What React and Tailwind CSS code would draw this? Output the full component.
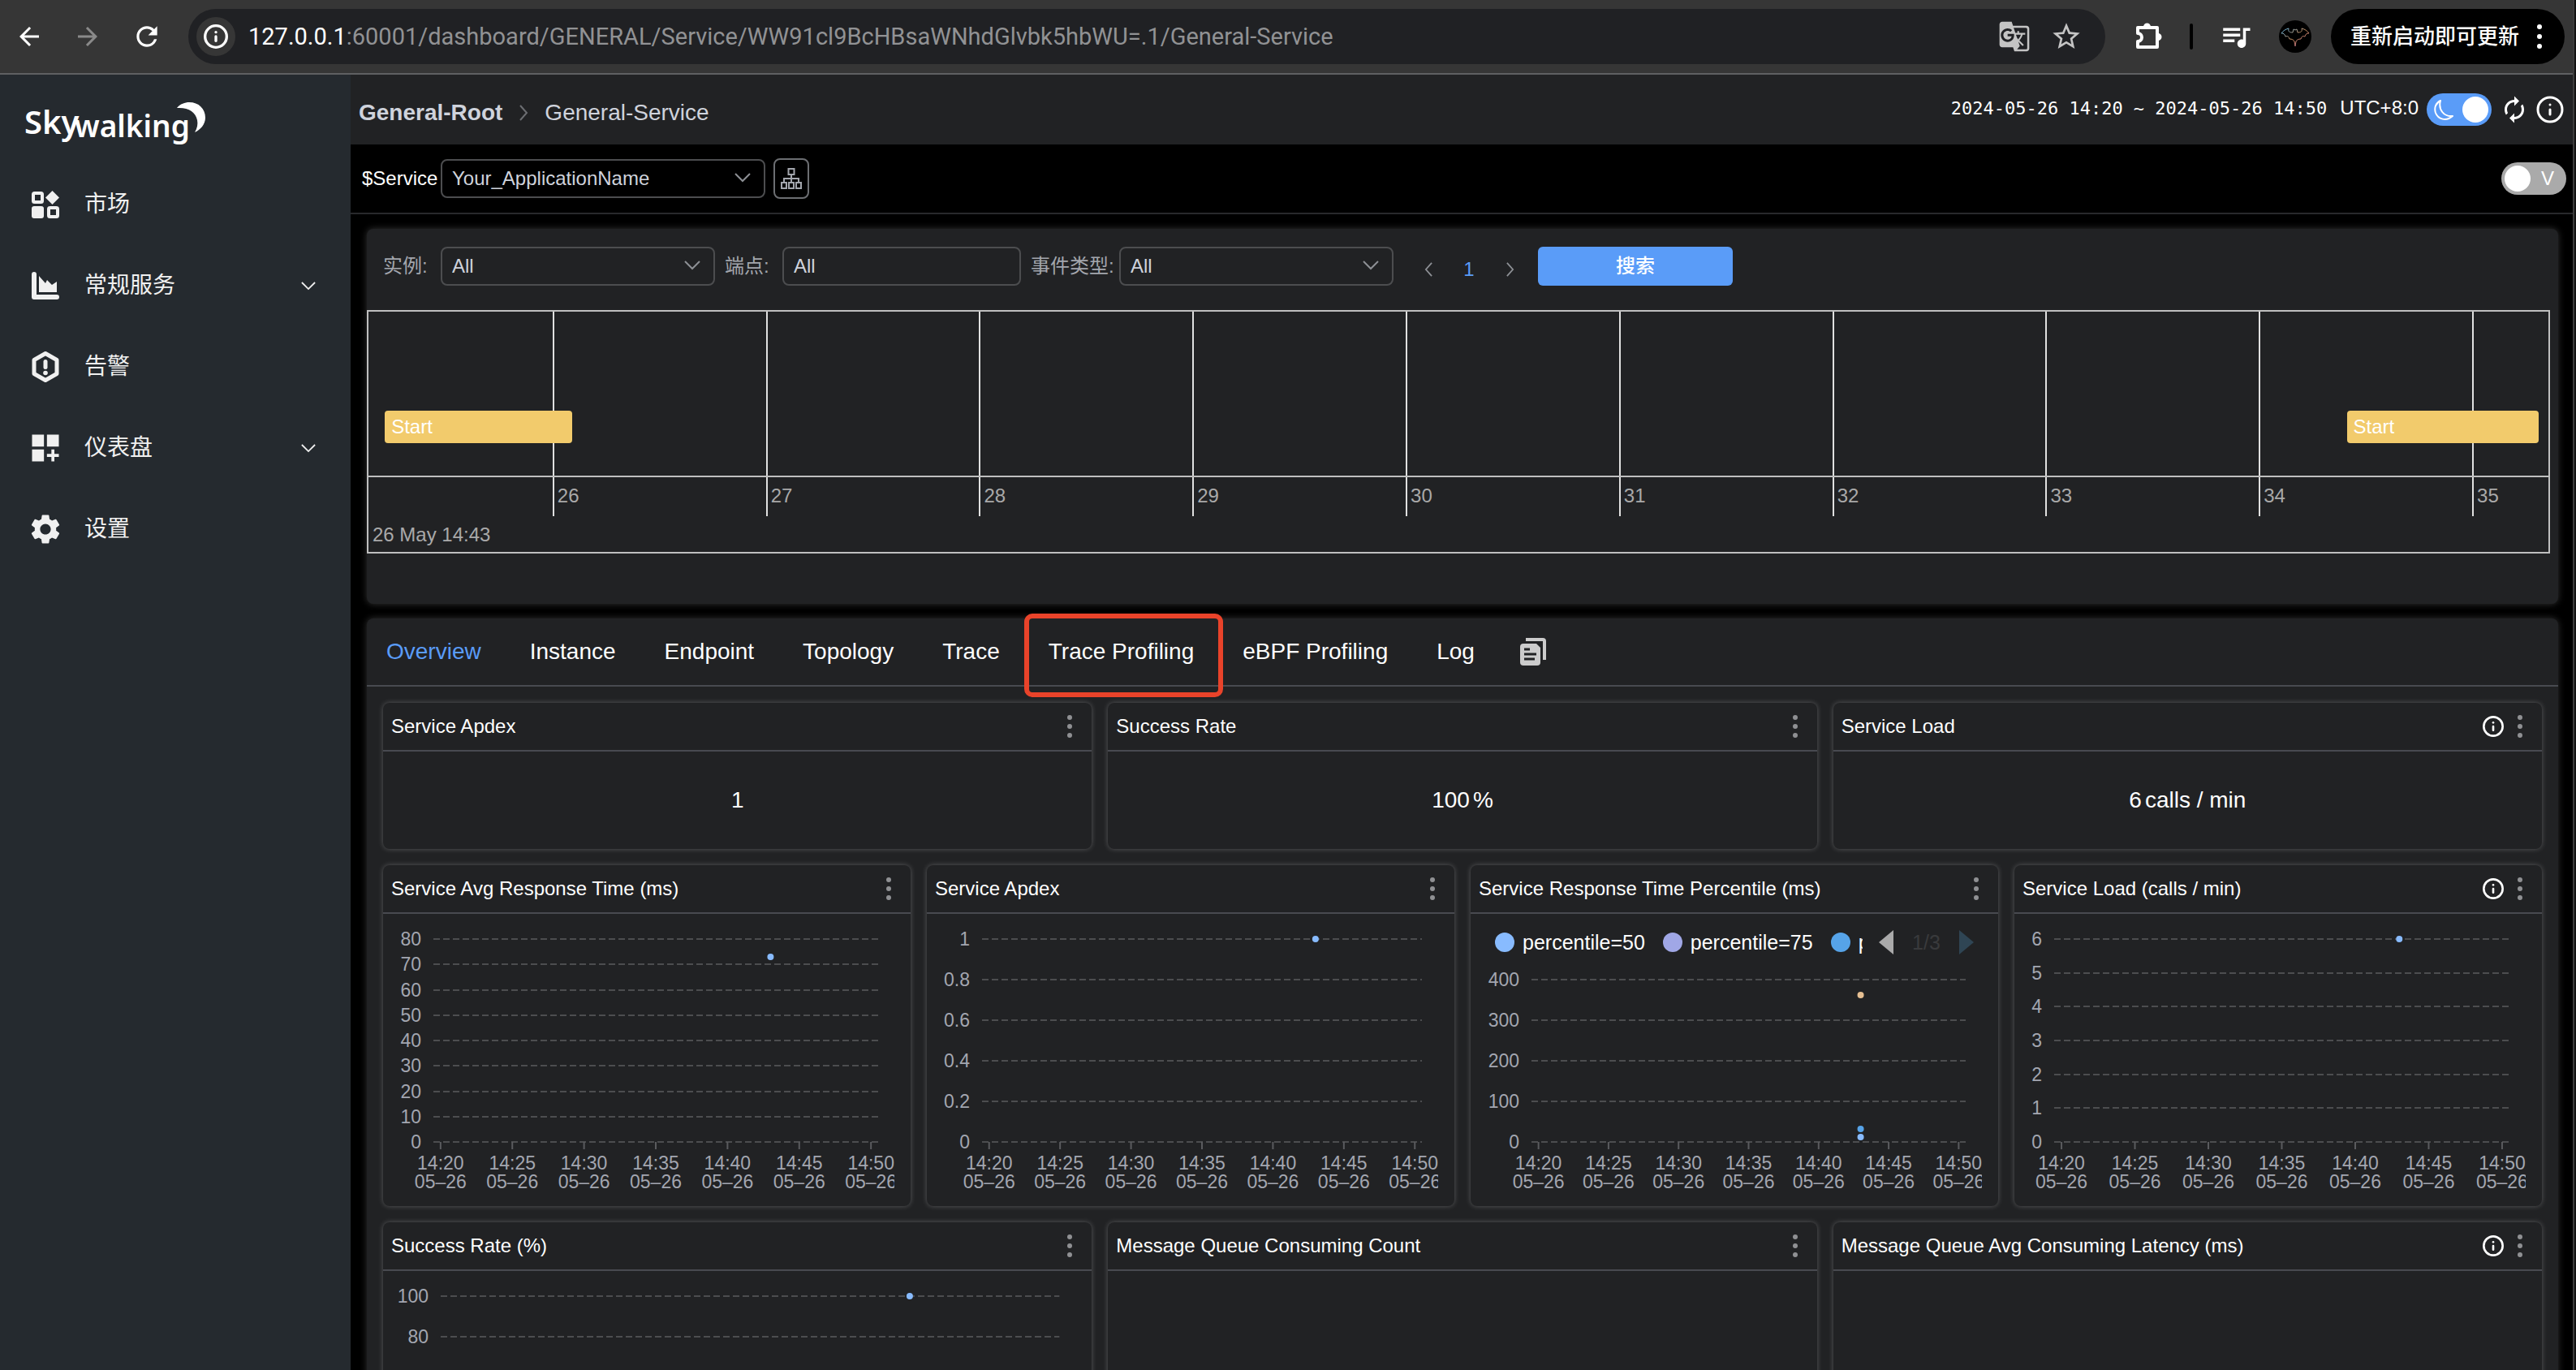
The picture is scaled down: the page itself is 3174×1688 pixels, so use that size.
import React from "react";
import {
  MdArrowBack,
  MdArrowForward,
  MdRefresh,
  MdGTranslate,
  MdStarBorder,
  MdQueueMusic,
  MdDashboardCustomize,
  MdSettings,
  MdAutorenew,
} from "react-icons/md";
import { Info } from "lucide-react";

const DownArrow = ({ className }) => (
  <svg viewBox="0 0 20 12" fill="none" stroke="currentColor" strokeWidth="2" className={className} aria-hidden="true">
    <path d="M1 1l9 9 9-9" />
  </svg>
);

const SideArrow = ({ className, left }) => (
  <svg viewBox="0 0 12 20" fill="none" stroke="currentColor" strokeWidth="2" className={className} aria-hidden="true">
    <path d={left ? "M10 1l-8 9 8 9" : "M2 1l8 9-8 9"} />
  </svg>
);

const PuzzleIcon = () => (
  <svg viewBox="0 0 36 36" className="h-9 w-9" fill="none" stroke="currentColor" strokeWidth="4" strokeLinejoin="round" aria-hidden="true">
    <path d="M4 7h24v24H4v-7a5 5 0 000-10z" />
    <path d="M11 6a4.500 4.500 0 019 0zM29 14a4.500 4.500 0 010 9z" fill="currentColor" stroke="none" />
  </svg>
);

const MarketIcon = () => (
  <svg viewBox="0 0 34 34" className="h-[34px] w-[34px]" fill="none" stroke="currentColor" strokeWidth="4" aria-hidden="true">
    <rect x="2" y="3" width="11" height="11" rx="1.5" />
    <path d="M25.5 0l8.5 8.5-8.5 8.5-8.500-8.500z" fill="currentColor" stroke="none" />
    <rect x="0" y="19" width="15" height="15" rx="3" fill="currentColor" stroke="none" />
    <rect x="21" y="21" width="11" height="11" rx="1.500" />
  </svg>
);

const AreaIcon = () => (
  <svg viewBox="0 0 34 34" className="h-[34px] w-[34px]" fill="currentColor" aria-hidden="true">
    <path d="M3 0a3 3 0 013 3v25h25a3 3 0 010 6H3a3 3 0 01-3-3V3a3 3 0 013-3z" />
    <path d="M9 25V5l8 9 2-4 6 6 6-4v13z" />
  </svg>
);

const AlarmIcon = () => (
  <svg viewBox="0 0 34 38" className="h-[38px] w-[34px]" fill="none" stroke="currentColor" aria-hidden="true">
    <path d="M17 2.500L31 10.500v17L17 35.500 3 27.500v-17z" strokeWidth="5" strokeLinejoin="round" />
    <path d="M17 12.500v7" strokeWidth="5" strokeLinecap="round" />
    <circle cx="17" cy="26.500" r="2.800" fill="currentColor" stroke="none" />
  </svg>
);

const TreeIcon = () => (
  <svg viewBox="0 0 26 26" className="h-[26px] w-[26px]" fill="none" stroke="currentColor" strokeWidth="2" aria-hidden="true">
    <rect x="9.500" y="1" width="7" height="7" />
    <rect x="1" y="18" width="6" height="7" />
    <rect x="10" y="18" width="6" height="7" />
    <rect x="19" y="18" width="6" height="7" />
    <path d="M13 8v10M4 18v-5h18v5" />
  </svg>
);

const CopyIcon = () => (
  <svg viewBox="0 0 32 34" className="h-[34px] w-8" aria-hidden="true">
    <path d="M7 0h21a4 4 0 014 4v23h-4V4H7z" fill="#cccccc" />
    <path d="M4 7h16l5 5v18a4 4 0 01-4 4H4a4 4 0 01-4-4V11a4 4 0 014-4z" fill="#cccccc" />
    <path d="M5 14h7M5 20h15M5 26h13" stroke="#212224" strokeWidth="3" />
  </svg>
);

const Bat = () => (
  <svg viewBox="0 0 40 40" className="h-10 w-10" aria-hidden="true">
    <defs>
      <linearGradient id="bat" x1="0" x2="1" y1="0" y2="1">
        <stop offset="0" stopColor="#5fb7e8" />
        <stop offset="0.5" stopColor="#c98c5c" />
        <stop offset="1" stopColor="#a0508f" />
      </linearGradient>
    </defs>
    <circle cx="20" cy="20" r="20" fill="#000" />
    <path
      d="M3 16c2-3 5-5 9-6-1 4 1 5 5 5l1-4 2 1 2-1 1 4c4 0 6-1 5-5 4 1 7 3 9 6-3 0-4 1-5 4-3-1-4 0-5 3-3 0-5 1-6 3l-1 6-1-6c-1-2-3-3-6-3-1-3-2-4-5-3-1-3-2-4-5-4z"
      fill="none"
      stroke="url(#bat)"
      strokeWidth="1"
    />
  </svg>
);

const Logo = () => (
  <svg viewBox="0 0 224 56" className="h-14 w-[224px] overflow-visible" fill="#fff" role="img" aria-label="Skywalking">
    <g fontFamily="Noto Sans, Open Sans, sans-serif" fontWeight="600">
      <text x="-2" y="41" fontSize="40">Sky</text>
      <text x="60" y="45" fontSize="37">walking</text>
    </g>
    <path d="M186 9C190 4 196 2 201 2c12 0 20 8 20 19 0 8-6 15-13 18 3-5 4-10 3-15C209 14 200 8 186 9z" />
  </svg>
);

function BrowserBar() {
  return (
    <div className="flex h-[92px] shrink-0 items-center border-b-2 border-[#5f6062] bg-[#363636] pl-[18px] pr-[10px] text-white">
      <button aria-label="Back"><MdArrowBack className="h-9 w-9" /></button>
      <button aria-label="Forward" className="ml-9 text-[#8a8a8a]"><MdArrowForward className="h-9 w-9" /></button>
      <button aria-label="Reload" className="ml-9"><MdRefresh className="h-[38px] w-[38px]" /></button>
      <div className="ml-8 flex h-[68px] min-w-0 flex-1 items-center rounded-full bg-[#202124] pl-[10px] pr-7">
        <button aria-label="Site information" className="flex h-12 w-12 shrink-0 items-center justify-center rounded-full bg-[#363636]">
          <Info className="h-8 w-8" strokeWidth={2.5} />
        </button>
        <p className="ml-4 flex-1 truncate font-['Roboto',sans-serif] text-[29px] leading-10 text-[#919294]">
          <span className="text-white">127.0.0.1</span>:60001/dashboard/GENERAL/Service/WW91cl9BcHBsaWNhdGlvbk5hbWU=.1/General-Service
        </p>
        <button aria-label="Translate" className="text-[#c4c4c4]"><MdGTranslate className="h-10 w-10" /></button>
        <button aria-label="Bookmark" className="ml-6 text-[#c4c4c4]"><MdStarBorder className="h-10 w-10" /></button>
      </div>
      <button aria-label="Extensions" className="ml-9"><PuzzleIcon /></button>
      <span className="ml-8 h-8 w-[4px] rounded-full bg-black" />
      <button aria-label="Media" className="ml-8"><MdQueueMusic className="h-[42px] w-[42px]" /></button>
      <button aria-label="Profile" className="ml-8"><Bat /></button>
      <button className="ml-6 flex h-[68px] w-[288px] items-center justify-between rounded-full bg-black pl-6 pr-7 text-[26px] font-medium">
        重新启动即可更新
        <svg viewBox="0 0 6 30" className="h-[30px] w-[6px]" fill="#fff" aria-hidden="true">
          <circle cx="3" cy="3" r="3" /><circle cx="3" cy="15" r="3" /><circle cx="3" cy="27" r="3" />
        </svg>
      </button>
    </div>
  );
}

const menu = [
  { label: "市场", icon: <MarketIcon /> },
  { label: "常规服务", icon: <AreaIcon />, more: true },
  { label: "告警", icon: <AlarmIcon /> },
  { label: "仪表盘", icon: <MdDashboardCustomize className="h-11 w-11" />, more: true },
  { label: "设置", icon: <MdSettings className="h-11 w-11" /> },
];

function Sidebar() {
  return (
    <aside className="w-[432px] shrink-0 bg-[#252a2f]">
      <div className="flex h-[110px] items-start pl-8 pt-8"><Logo /></div>
      <nav>
        {menu.map((m) => (
          <a key={m.label} href="#" className="flex h-[100px] items-center pl-[34px] pr-[43px] text-[28px] text-[#f0f0f0]">
            <span className="flex w-11 justify-center">{m.icon}</span>
            <span className="ml-[26px] flex-1">{m.label}</span>
            {m.more && <DownArrow className="h-[11px] w-[18px]" />}
          </a>
        ))}
      </nav>
    </aside>
  );
}

function Select({ id, value, width }) {
  return (
    <span className={`relative flex ${width}`}>
      <select id={id} className="h-12 w-full appearance-none rounded-lg border-2 border-[#4c4d4f] bg-transparent pl-3 pr-12 text-[24px] leading-8 text-[#cfd3dc]">
        <option>{value}</option>
      </select>
      <DownArrow className="pointer-events-none absolute right-[18px] top-[17px] h-3 w-5 text-[#8d9095]" />
    </span>
  );
}

function Header() {
  return (
    <header className="flex h-[86px] shrink-0 items-center justify-between bg-[#212224] pl-[10px] pr-[10px]">
      <nav className="mt-2 flex items-center text-[28px] text-[#cfd3dc]">
        <a href="#" className="font-bold">General-Root</a>
        <SideArrow className="mx-5 h-5 w-3 text-[#6c6e72]" />
        <span>General-Service</span>
      </nav>
      <div className="flex items-center text-white">
        <span className="mb-1 font-['DejaVu_Sans_Mono',monospace] text-[22px]">2024-05-26 14:20 ~ 2024-05-26 14:50</span>
        <span className="mb-1 ml-4 text-[24px]">UTC+8:0</span>
        <span className="relative ml-[10px] flex">
          <input type="checkbox" role="switch" aria-label="Dark theme" defaultChecked className="h-10 w-20 appearance-none rounded-full bg-[#5a9cf8] before:ml-11 before:mt-1 before:block before:h-8 before:w-8 before:rounded-full before:bg-white" />
          <svg viewBox="0 0 26 26" className="pointer-events-none absolute left-[9px] top-2 h-[26px] w-[26px]" fill="none" stroke="#fff" strokeWidth="2" strokeLinejoin="round" aria-hidden="true">
            <path d="M8 1C2 4 0 10 2 16c3 8 13 11 21 4C12 21 5 12 8 1z" />
          </svg>
        </span>
        <button aria-label="Reload data" className="ml-[10px]"><MdAutorenew className="h-9 w-9" /></button>
        <button aria-label="About" className="ml-2"><Info className="h-9 w-9" strokeWidth={2} /></button>
      </div>
    </header>
  );
}

const marks = ["", "26", "27", "28", "29", "30", "31", "32", "33", "34", "35"];

function Events() {
  return (
    <section className="ml-5 mr-[18px] mt-[18px] h-[462px] shrink-0 rounded-lg bg-[#212224] pt-[22px] shadow-[0_0_8px_rgba(255,255,255,0.2)]">
      <form className="flex items-center pl-5 text-[24px] text-[#a3a6ad]" onSubmit={(e) => e.preventDefault()}>
        <label htmlFor="inst" className="w-[71px]">实例:</label>
        <Select id="inst" value="All" width="w-[338px]" />
        <label htmlFor="endp" className="ml-3 w-[71px]">端点:</label>
        <input id="endp" defaultValue="All" className="h-12 w-[294px] rounded-lg border-2 border-[#4c4d4f] bg-transparent pl-3 text-[#cfd3dc]" />
        <label htmlFor="type" className="ml-3 w-[109px]">事件类型:</label>
        <Select id="type" value="All" width="w-[338px]" />
        <div className="ml-[18px] mr-[10px] mt-2 flex items-center">
          <button type="button" aria-label="Previous" className="flex w-[50px] justify-center text-[#8d9095]"><SideArrow left className="h-[18px] w-[11px]" /></button>
          <button type="button" className="w-[50px] text-[#5a9cf8]">1</button>
          <button type="button" aria-label="Next" className="flex w-[50px] justify-center text-[#8d9095]"><SideArrow className="h-[18px] w-[11px]" /></button>
        </div>
        <button type="submit" className="h-12 w-60 rounded-md bg-[#5a9cf8] font-medium text-white">搜索</button>
      </form>
      <div className="relative mr-[10px] mt-[30px] h-[300px] border-2 border-[#bfbfbf] text-[24px] text-[#a9a9a9]">
        <div className="grid h-[252px] grid-cols-[227fr_repeat(9,263fr)_94fr]">
          {marks.map((m, i) => (
            <div key={i} className={i ? "flex flex-col border-l-2 border-[#e0e0e0]" : "flex flex-col"}>
              <div className="h-[202px]" />
              <span className="flex h-[50px] items-center pl-1">{m}</span>
            </div>
          ))}
        </div>
        <div className="pl-[5px] leading-[46px]">26 May 14:43</div>
        <div className="absolute inset-x-0 top-[202px] h-[2px] bg-[#bfbfbf]" />
        <div className="absolute left-[0.75%] top-[122px] flex h-10 w-[8.6%] items-center rounded bg-[#f2cb6c] pl-2 text-white">Start</div>
        <div className="absolute left-[90.75%] top-[122px] flex h-10 w-[8.8%] items-center rounded bg-[#f2cb6c] pl-2 text-white">Start</div>
      </div>
    </section>
  );
}

function Card({ title, info, height, children }) {
  return (
    <article className={`${height} min-w-0 overflow-hidden rounded-lg bg-[#212224] shadow-[0_0_6px_rgba(255,255,255,0.25)]`}>
      <div className="flex h-[60px] items-center border-b-2 border-[#484a50] pl-[10px] pr-6">
        <h3 className="min-w-0 flex-1 truncate text-[24px] leading-8 text-white">{title}</h3>
        {info && <button aria-label="Info" className="mr-4 text-white"><Info className="h-7 w-7" strokeWidth={2.25} /></button>}
        <button aria-label="More">
          <svg viewBox="0 0 6 28" className="h-7 w-[6px]" fill="#8f9093" aria-hidden="true">
            <circle cx="3" cy="3" r="3" /><circle cx="3" cy="14" r="3" /><circle cx="3" cy="25" r="3" />
          </svg>
        </button>
      </div>
      {children}
    </article>
  );
}

const Stat = ({ value, unit }) => (
  <div className="flex h-[120px] items-center justify-center gap-1 text-[28px] text-white">
    <span>{value}</span>
    {unit && <span>{unit}</span>}
  </div>
);

const times = ["14:20", "14:25", "14:30", "14:35", "14:40", "14:45", "14:50"];
const slot = (i) => `${((i + 0.5) / 31) * 100}%`;

function Chart({ pad, top = 31, ticks, points }) {
  const max = ticks[0];
  const yOf = (v) => 281 - (v / max) * (281 - top);
  return (
    <div className={`mr-5 overflow-hidden pr-5 ${pad}`}>
      <svg className="h-[350px] w-full overflow-visible text-[23px]" role="img" aria-label="Line chart">
        {ticks.map((t) => {
          const y = Math.round(yOf(t));
          return (
            <g key={t}>
              <line x1="0" x2="100%" y1={y} y2={y} stroke="#4c4d4f" strokeWidth="2" strokeDasharray="8 4" />
              <text x="-15" y={y + 8} textAnchor="end" fill="#a3a6b0">{t}</text>
            </g>
          );
        })}
        {times.map((t, i) => (
          <g key={t}>
            <line x1={slot(i * 5)} x2={slot(i * 5)} y1="281" y2="290" stroke="#5a5b5e" strokeWidth="2" />
            <text x={slot(i * 5)} y="315" textAnchor="middle" fill="#a3a6b0">{t}</text>
            <text x={slot(i * 5)} y="338" textAnchor="middle" fill="#a3a6b0">05–26</text>
          </g>
        ))}
        {points.map(([v, c]) => (
          <circle key={v} cx={slot(23)} cy={yOf(v)} r="4" fill={c} />
        ))}
      </svg>
    </div>
  );
}

const LegendItem = ({ color, children }) => (
  <span className="flex shrink-0 items-center gap-[10px]">
    <span className={`h-6 w-6 rounded-full ${color}`} />
    {children}
  </span>
);

function Legend() {
  return (
    <div className="-mb-[50px] flex h-[50px] items-center pl-[30px] pr-[30px] pt-5 text-[25px] leading-[30px] text-white">
      <div className="flex w-[453px] gap-[22px] overflow-hidden">
        <LegendItem color="bg-[#88bbff]">percentile=50</LegendItem>
        <LegendItem color="bg-[#a0a7e6]">percentile=75</LegendItem>
        <LegendItem color="bg-[#56a3e8]">p</LegendItem>
      </div>
      <svg viewBox="0 0 18 30" className="ml-5 h-[30px] w-[18px] shrink-0" aria-hidden="true"><path d="M18 0v30L0 15z" fill="#aaa" /></svg>
      <span className="flex-1 text-center text-[#393a3c]">1/3</span>
      <svg viewBox="0 0 18 30" className="h-[30px] w-[18px] shrink-0" aria-hidden="true"><path d="M0 0v30l18-15z" fill="#2f4554" /></svg>
    </div>
  );
}

const tabs = ["Overview", "Instance", "Endpoint", "Topology", "Trace", "Trace Profiling", "eBPF Profiling", "Log"];

function Widgets() {
  const blue = "#88bbff";
  return (
    <section className="ml-5 mr-[18px] mt-[18px] flex-1 rounded-lg bg-[#212224] shadow-[0_0_8px_rgba(255,255,255,0.2)]">
      <div className="flex h-[84px] items-center gap-[60px] border-b-2 border-[#484a50] pl-6 text-[28px] text-white">
        {tabs.map((t) => (
          <button key={t} className={t === "Overview" ? "text-[#5a9cf8]" : "relative"}>
            {t}
            {t === "Trace Profiling" && (
              <span className="absolute -left-[30px] -right-9 -top-[26px] h-[103px] rounded-[10px] border-[6px] border-[#e9432a]" />
            )}
          </button>
        ))}
        <button aria-label="Copy" className="-ml-1"><CopyIcon /></button>
      </div>
      <div className="flex flex-col gap-5 p-5">
        <div className="grid grid-cols-3 gap-5">
          <Card title="Service Apdex" height="h-[180px]"><Stat value="1" /></Card>
          <Card title="Success Rate" height="h-[180px]"><Stat value="100" unit="%" /></Card>
          <Card title="Service Load" height="h-[180px]" info><Stat value="6" unit="calls / min" /></Card>
        </div>
        <div className="grid grid-cols-4 gap-5">
          <Card title="Service Avg Response Time (ms)" height="h-[420px]">
            <Chart pad="pl-[62px]" ticks={[80, 70, 60, 50, 40, 30, 20, 10, 0]} points={[[73, blue]]} />
          </Card>
          <Card title="Service Apdex" height="h-[420px]">
            <Chart pad="pl-[68px]" ticks={[1, 0.8, 0.6, 0.4, 0.2, 0]} points={[[1, blue]]} />
          </Card>
          <Card title="Service Response Time Percentile (ms)" height="h-[420px]">
            <Legend />
            <Chart pad="pl-[75px]" top={81} ticks={[400, 300, 200, 100, 0]} points={[[362, "#e6bf92"], [32, "#56a3e8"], [12, blue]]} />
          </Card>
          <Card title="Service Load (calls / min)" height="h-[420px]" info>
            <Chart pad="pl-[49px]" ticks={[6, 5, 4, 3, 2, 1, 0]} points={[[6, blue]]} />
          </Card>
        </div>
        <div className="grid grid-cols-3 gap-5">
          <Card title="Success Rate (%)" height="h-[420px]">
            <Chart pad="pl-[71px]" ticks={[100, 80, 60, 40, 20, 0]} points={[[100, blue]]} />
          </Card>
          <Card title="Message Queue Consuming Count" height="h-[420px]" />
          <Card title="Message Queue Avg Consuming Latency (ms)" height="h-[420px]" info />
        </div>
      </div>
    </section>
  );
}

export default function App() {
  return (
    <div className="h-screen overflow-hidden border-r-2 border-[#111] font-['Liberation_Sans','Noto_Sans_CJK_SC',sans-serif]">
      <div className="flex h-full flex-col border-r-2 border-[#3c3c3c] bg-black">
        <BrowserBar />
        <div className="flex min-h-0 flex-1">
          <Sidebar />
          <main className="flex min-w-0 flex-1 flex-col overflow-hidden">
            <Header />
            <div className="flex h-[86px] shrink-0 items-center border-b-2 border-[#28292b] pl-[14px] pr-2 text-[24px] text-white">
              <label htmlFor="svc" className="w-[97px]">$Service</label>
              <Select id="svc" value="Your_ApplicationName" width="w-[400px]" />
              <button aria-label="Hierarchy" className="ml-[10px] flex h-[50px] w-11 items-center justify-center rounded-lg border-2 border-[#6c6e72] text-[#a3a6ad]"><TreeIcon /></button>
              <label className="relative ml-auto flex">
                <input type="checkbox" role="switch" aria-label="V" className="h-10 w-20 appearance-none rounded-full bg-[#aaaaaa] before:ml-1 before:mt-1 before:block before:h-8 before:w-8 before:rounded-full before:bg-white" />
                <span className="pointer-events-none absolute right-[15px] top-1 leading-8">V</span>
              </label>
            </div>
            <Events />
            <Widgets />
          </main>
        </div>
      </div>
    </div>
  );
}
